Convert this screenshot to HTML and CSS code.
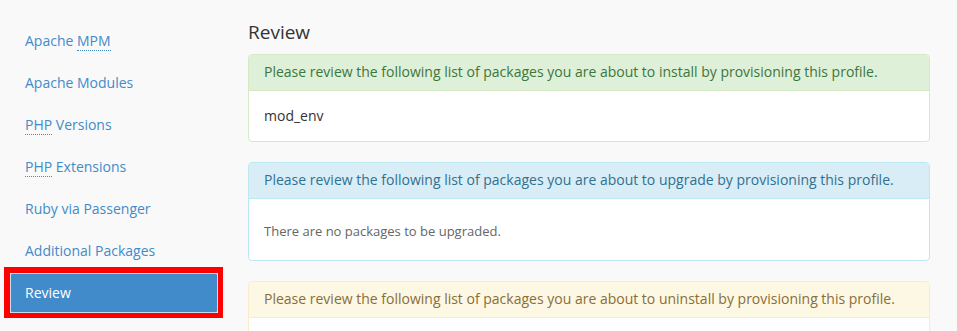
FILE: index.html
```html
<!DOCTYPE html>
<html>
<head>
<meta charset="utf-8">
<link rel="stylesheet" href="styles.css">
</head>
<body>
<div class="layout">
  <nav class="sidebar">
    <ul class="nav">
      <li><a href="#">Apache <abbr title="Multi-Processing Module">MPM</abbr></a></li>
      <li><a href="#">Apache Modules</a></li>
      <li><a href="#"><abbr title="PHP: Hypertext Preprocessor">PHP</abbr> Versions</a></li>
      <li><a href="#"><abbr title="PHP: Hypertext Preprocessor">PHP</abbr> Extensions</a></li>
      <li><a href="#">Ruby via Passenger</a></li>
      <li><a href="#">Additional Packages</a></li>
      <li class="active"><a href="#">Review</a></li>
    </ul>
  </nav>
  <main class="main">
    <h2 class="title">Review</h2>
    <section class="panel panel-success">
      <div class="panel-heading">Please review the following list of packages you are about to install by provisioning this profile.</div>
      <div class="panel-body">mod_env</div>
    </section>
    <section class="panel panel-info">
      <div class="panel-heading">Please review the following list of packages you are about to upgrade by provisioning this profile.</div>
      <div class="panel-body empty">There are no packages to be upgraded.</div>
    </section>
    <section class="panel panel-warning">
      <div class="panel-heading">Please review the following list of packages you are about to uninstall by provisioning this profile.</div>
      <div class="panel-body">&nbsp;</div>
    </section>
  </main>
</div>
</body>
</html>
```

FILE: styles.css
```css
* { box-sizing: border-box; }
html, body {
  margin: 0;
  padding: 0;
  background: #f9f9f9;
  font-family: "Open Sans", "Liberation Sans", sans-serif;
  font-size: 14px;
  line-height: 20px;
  color: #333;
  overflow: hidden;
}
.layout {
  display: flex;
  align-items: flex-start;
}
.sidebar {
  width: 218px;
  padding-left: 10px;
  padding-top: 19px;
  flex: none;
}
.nav {
  list-style: none;
  margin: 0;
  padding: 0;
}
.nav li {
  margin-top: 2px;
}
.nav a {
  display: block;
  padding: 10px 15px;
  color: #428bca;
  text-decoration: none;
  border-radius: 3px;
}
.nav abbr {
  text-decoration: none;
  border-bottom: 1px dotted #428bca;
  cursor: help;
}
.nav li.active {
  margin: -4px -5px 0 -6px;
  border: 5px solid #ff0000;
  border-left-width: 6px;
  border-top-width: 6px;
}
.nav li.active a {
  background: #428bca;
  color: #fff;
  padding: 9px 14px;
  border: 1px solid #c8dcee;
  border-radius: 2px;
}
.main {
  width: 682px;
  margin-left: 30px;
  padding-top: 22px;
}
.title {
  margin: 0 0 12px;
  font-size: 19px;
  line-height: 20px;
  font-weight: 400;
  color: #333;
}
.panel {
  border: 1px solid #ddd;
  border-radius: 4px;
  background: #fff;
  margin-bottom: 20px;
  overflow: hidden;
}
.panel-heading {
  padding: 7px 15px 8px;
  border-bottom: 1px solid transparent;
}
.panel-body {
  padding: 15px;
}
.panel-body.empty {
  padding: 22px 15px 19px;
  color: #666;
  font-size: 13px;
}
.panel-success { border-color: #d6e9c6; }
.panel-success .panel-heading { background: #dff0d8; color: #3c763d; border-color: #d6e9c6; }
.panel-info { border-color: #bce8f1; }
.panel-info .panel-heading { background: #d9edf7; color: #31708f; border-color: #bce8f1; }
.panel-warning { border-color: #faebcc; }
.panel-warning .panel-heading { background: #fcf8e3; color: #8a6d3b; border-color: #faebcc; }
```
